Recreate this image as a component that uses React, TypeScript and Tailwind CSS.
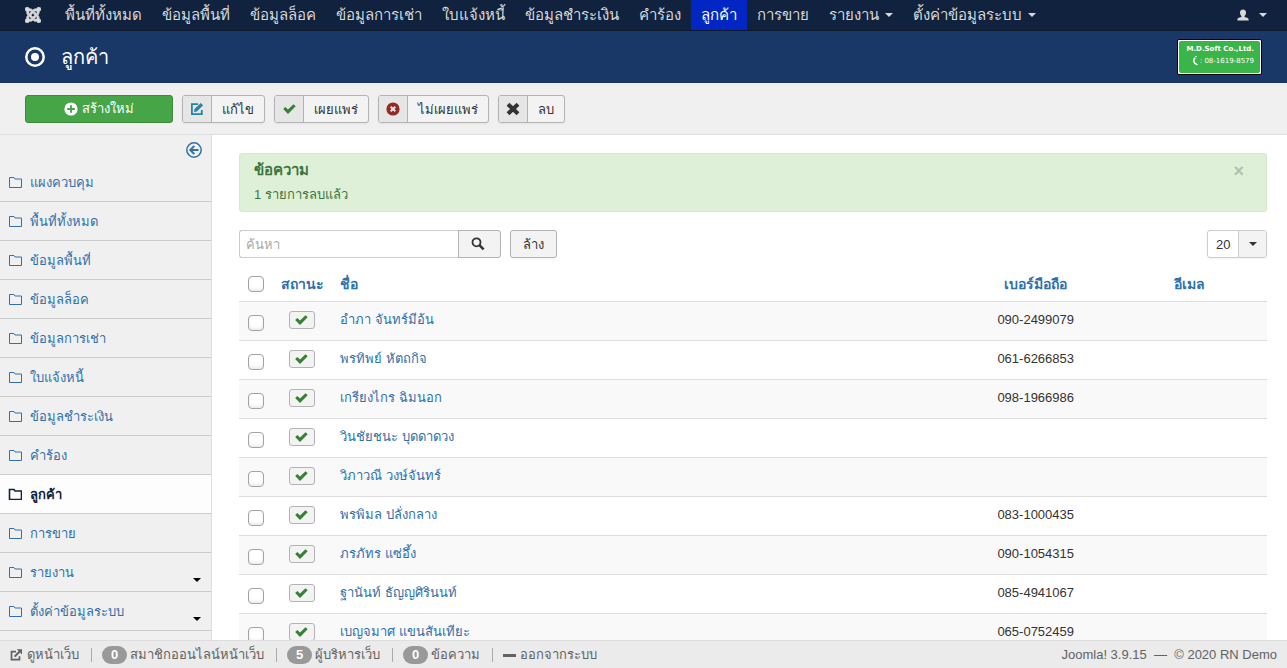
import type { ReactNode } from "react";
import { ImJoomla } from "react-icons/im";

const topNav = [
  { label: "พื้นที่ทั้งหมด" },
  { label: "ข้อมูลพื้นที่" },
  { label: "ข้อมูลล็อค" },
  { label: "ข้อมูลการเช่า" },
  { label: "ใบแจ้งหนี้" },
  { label: "ข้อมูลชำระเงิน" },
  { label: "คำร้อง" },
  { label: "ลูกค้า", active: true },
  { label: "การขาย" },
  { label: "รายงาน", menu: true },
  { label: "ตั้งค่าข้อมูลระบบ", menu: true },
];

const sideNav = [{ label: "แผงควบคุม" }, ...topNav] as { label: string; active?: boolean; menu?: boolean }[];

const customers = [
  { name: "อำภา จันทร์มีอ้น", phone: "090-2499079" },
  { name: "พรทิพย์ หัตถกิจ", phone: "061-6266853" },
  { name: "เกรียงไกร ฉิมนอก", phone: "098-1966986" },
  { name: "วินชัยชนะ บุดดาดวง", phone: "" },
  { name: "วิภาวณี วงษ์จันทร์", phone: "" },
  { name: "พรพิมล ปลั่งกลาง", phone: "083-1000435" },
  { name: "ภรภัทร แซ่อึ้ง", phone: "090-1054315" },
  { name: "ฐานันท์ ธัญญศิรินนท์", phone: "085-4941067" },
  { name: "เบญจมาศ แขนสันเทียะ", phone: "065-0752459" },
];

function Caret({ className = "" }: { className?: string }) {
  return (
    <svg viewBox="0 0 8 4" className={`h-1 w-2 shrink-0 ${className}`} fill="currentColor" aria-hidden="true">
      <path d="M0 0h8L4 4z" />
    </svg>
  );
}

function FolderIcon({ bold }: { bold?: boolean }) {
  return (
    <svg viewBox="0 0 14 12" className="h-3 w-3.5 shrink-0" fill="none" stroke="currentColor" strokeWidth={bold ? 1.6 : 1} aria-hidden="true">
      <path d="M1.5 11.5V1.5h4.500l1 1.500h6.500v8.500z" />
    </svg>
  );
}

function EditIcon() {
  return (
    <svg viewBox="0 0 14 14" className="size-3.5 text-[#2384a3]" aria-hidden="true">
      <path d="M8 2.200H1.900v9.900h9.900V8" fill="none" stroke="currentColor" strokeWidth="1.800" />
      <path d="M4 10l.5-2.900L10.700 .900l2.400 2.400L6.900 9.500z" fill="currentColor" />
    </svg>
  );
}

function CheckIcon() {
  return (
    <svg viewBox="0 0 13 10" className="h-2.5 w-[13px] text-[#378137]" fill="currentColor" aria-hidden="true">
      <path d="M.2 5.100L2.300 3l2.700 2.500L10.500.2l2.200 2L5.300 9.800h-.6z" />
    </svg>
  );
}

function CrossIcon() {
  return (
    <svg viewBox="0 0 14 14" className="size-3.5" stroke="currentColor" strokeWidth="4" aria-hidden="true">
      <path d="M2 2.200l10 9.600M12 2.200L2 11.800" />
    </svg>
  );
}

function PlusCircleIcon() {
  return (
    <svg viewBox="0 0 14 14" className="size-3.5" aria-hidden="true">
      <circle cx="7" cy="7" r="6.600" fill="#fff" />
      <path d="M7 3.200v7.600M3.200 7h7.600" stroke="#46a546" strokeWidth="1.900" />
    </svg>
  );
}

function CancelCircleIcon() {
  return (
    <svg viewBox="0 0 14 14" className="size-3.5" aria-hidden="true">
      <circle cx="7" cy="7" r="6.600" fill="#942a25" />
      <path d="M4.700 4.700l4.600 4.600M9.300 4.700L4.700 9.300" stroke="#e6e6e6" strokeWidth="2" />
    </svg>
  );
}

function TargetIcon() {
  return (
    <svg viewBox="0 0 20 20" className="size-5" aria-hidden="true">
      <circle cx="10" cy="10" r="8.700" fill="none" stroke="currentColor" strokeWidth="2.500" />
      <circle cx="10" cy="10" r="4" fill="currentColor" />
    </svg>
  );
}

function SearchIcon() {
  return (
    <svg viewBox="0 0 14 14" className="size-3.5" fill="none" stroke="currentColor" aria-hidden="true">
      <circle cx="5.500" cy="5.300" r="4" strokeWidth="1.800" />
      <path d="M8.400 8.200l4.200 4.100" strokeWidth="2.500" />
    </svg>
  );
}

function ExternalIcon() {
  return (
    <svg viewBox="0 0 12 12" className="size-3 shrink-0" fill="none" stroke="currentColor" aria-hidden="true">
      <path d="M6 2.600H1.500v8h8V7.200" strokeWidth="1.700" />
      <path d="M4.600 7.600L9.400 2.800" strokeWidth="2" />
      <path d="M6.800.2H12v5.200z" fill="currentColor" stroke="none" />
    </svg>
  );
}

function UserIcon() {
  return (
    <svg viewBox="0 0 12 12" className="size-3" fill="currentColor" aria-hidden="true">
      <path d="M6 .4c2 0 3 1.300 3 3.100 0 1.500-.5 2.700-1.400 3.400v1.200C9.700 8.700 11.600 9 11.600 10.500v1H.4v-1C.4 9 2.300 8.700 4.400 8.100V6.900C3.500 6.200 3 5 3 3.500 3 1.700 4 .4 6 .4z" />
    </svg>
  );
}

function BackIcon() {
  return (
    <svg viewBox="0 0 16 16" className="size-4" fill="none" stroke="currentColor" aria-hidden="true">
      <circle cx="8" cy="8" r="7.200" strokeWidth="1.500" />
      <path d="M8.300 3.900L4.300 8l4 4.100M4.500 8h8" strokeWidth="2" />
    </svg>
  );
}

function PhoneIcon() {
  return (
    <svg viewBox="0 0 8 10" className="h-2.5 w-2" fill="none" stroke="currentColor" strokeWidth="1.500" aria-hidden="true">
      <path d="M2.600 2C1 4 1.800 7.600 5 8.800" />
      <path d="M2.400 1.800l1.400.8M4.500 7.900l1.400.9M3.200.6h1.600" strokeWidth="1" />
    </svg>
  );
}

function ToolButton({ icon, label }: { icon: ReactNode; label: string }) {
  return (
    <button className="flex h-7 items-stretch overflow-hidden rounded-[3px] border border-[#b3b3b3] bg-[#f3f3f3] text-[#333] shadow-[0_1px_2px_rgba(0,0,0,0.05)]">
      <span className="flex w-[29px] items-center justify-center border-r border-[#b3b3b3] bg-[#e6e6e6]">{icon}</span>
      <span className="px-2.5 leading-7">{label}</span>
    </button>
  );
}

function Check({ label }: { label: string }) {
  return (
    <input
      type="checkbox"
      aria-label={label}
      className="block size-4 appearance-none rounded-[4px] border border-[#a3a3a3] bg-white shadow-[inset_0_-2px_3px_rgba(0,0,0,0.08)] checked:bg-[#3071a9]"
    />
  );
}

function Counter({ value, label }: { value: number; label: string }) {
  return (
    <span className="flex items-center gap-[3px]">
      <span className="flex h-[18px] w-[25px] items-center justify-center rounded-full bg-[#999] font-bold text-white">{value}</span>
      {label}
    </span>
  );
}

function Divider() {
  return <span className="mr-2.5 ml-3 h-3.5 w-px bg-[#aaa]" />;
}

export default function App() {
  return (
    <div className="flex h-screen flex-col overflow-hidden bg-white font-['Liberation_Sans',sans-serif] text-[13px] leading-[18px] text-[#333]">
      <nav className="flex h-[31px] shrink-0 items-stretch border-b border-[#0d1a2c] bg-[#10223e] text-[15px] leading-[30px] text-[#d9d9d9]">
        <a href="#" aria-label="Joomla" className="flex items-center pr-3.5 pl-[25px]">
          <ImJoomla className="size-4" stroke="currentColor" strokeWidth="0.6" />
        </a>
        {topNav.map((item) => (
          <a
            key={item.label}
            href="#"
            className={`flex items-center gap-1.5 px-2.5 whitespace-nowrap ${item.active ? "bg-[#0226c4] text-white" : ""}`}
          >
            {item.label}
            {item.menu && <Caret />}
          </a>
        ))}
        <a href="#" aria-label="User menu" className="ml-auto flex items-center gap-2.5 pr-5">
          <UserIcon />
          <Caret />
        </a>
      </nav>

      <header className="flex h-[52px] shrink-0 items-center justify-between bg-[#1a3867] px-[25px] text-white">
        <h1 className="flex items-center gap-4 text-[20px] leading-9">
          <TargetIcon />
          ลูกค้า
        </h1>
        <div className="h-9 w-[85px] rounded-[2px] border border-black bg-white p-px">
          <div className="flex h-full flex-col items-end justify-center rounded-[2px] bg-[#39b54a] pr-1.5 pb-1 font-['DejaVu_Sans',sans-serif] text-[7px] leading-3 whitespace-nowrap">
            <b>M.D.Soft Co.,Ltd.</b>
            <span className="flex items-center">
              <PhoneIcon />: 08-1619-8579
            </span>
          </div>
        </div>
      </header>

      <div className="flex h-[52px] shrink-0 items-center gap-[9px] border-b border-[#dedede] bg-[#f0f0f0] px-[25px]">
        <button className="flex h-7 w-[148px] items-center justify-center gap-1 rounded-[3px] border border-[#3a8a3a] bg-[#46a546] leading-7 text-white">
          <PlusCircleIcon />
          สร้างใหม่
        </button>
        <ToolButton icon={<EditIcon />} label="แก้ไข" />
        <ToolButton icon={<CheckIcon />} label="เผยแพร่" />
        <ToolButton icon={<CancelCircleIcon />} label="ไม่เผยแพร่" />
        <ToolButton icon={<CrossIcon />} label="ลบ" />
      </div>

      <div className="flex min-h-0 flex-1">
        <aside className="w-[212px] shrink-0 overflow-hidden border-r border-[#dedede] bg-[#f0f0f0] text-[#3071a9]">
          <div className="flex h-7 items-center justify-end px-[9px] pt-0.5">
            <button aria-label="ซ่อนแถบข้าง">
              <BackIcon />
            </button>
          </div>
          <ul>
            {sideNav.map((item) => (
              <li key={item.label} className={`border-b border-[#ccc] ${item.active ? "bg-[#fdfdfd] font-bold text-[#10223e]" : ""}`}>
                <a href="#" className="flex h-[38px] items-center gap-2 pr-2.5 pl-2">
                  <FolderIcon bold={item.active} />
                  <span className="pt-px">{item.label}</span>
                  {item.menu && <Caret className="mt-4 ml-auto text-black" />}
                </a>
              </li>
            ))}
          </ul>
        </aside>

        <main className="min-w-0 flex-1 overflow-y-auto pt-[18px] pr-5 pl-[27px] [scrollbar-width:none]">
          <div className="flex items-start justify-between rounded-[3px] border border-[#d6e9c6] bg-[#dff0d8] px-3.5 py-[7px] text-[#3c763d]">
            <div>
              <h4 className="text-[15px] leading-[18px] font-bold">ข้อความ</h4>
              <p className="mt-[7px]">1 รายการลบแล้ว</p>
            </div>
            <button aria-label="ปิด" className="mr-2 text-[18px] leading-5 font-bold text-[#b2c0ad]">
              ×
            </button>
          </div>

          <div className="mt-[18px] flex h-7 items-stretch">
            <input
              type="text"
              aria-label="ค้นหา"
              placeholder="ค้นหา"
              className="w-[219px] rounded-l-[3px] border border-r-0 border-[#ccc] px-1.5 pt-px placeholder:text-[#a9a9a9] placeholder:opacity-100"
            />
            <button aria-label="ค้นหา" className="flex w-[43px] items-center justify-center rounded-r-[3px] border border-[#b3b3b3] bg-[#f3f3f3] pr-1">
              <SearchIcon />
            </button>
            <button className="ml-[9px] rounded-[3px] border border-[#b3b3b3] bg-[#f3f3f3] px-3 leading-7 shadow-[0_1px_2px_rgba(0,0,0,0.05)]">ล้าง</button>
            <div className="relative ml-auto flex w-[60px] rounded-[3px] border border-[#ccc] shadow-[0_1px_2px_rgba(0,0,0,0.05)]">
              <select aria-label="จำนวนต่อหน้า" className="w-full appearance-none bg-transparent pt-px pl-2" defaultValue="20">
                <option>20</option>
                <option>50</option>
              </select>
              <span className="pointer-events-none absolute inset-y-0 right-0 flex w-7 items-center justify-center rounded-r-[2px] border-l border-[#ccc] bg-[#f3f3f3]">
                <Caret />
              </span>
            </div>
          </div>

          <table className="mt-2 w-full table-fixed border-collapse">
            <thead>
              <tr className="h-[35px] text-[14px] text-[#3071a9]">
                <th className="w-[34px] pt-px pl-[9px]">
                  <Check label="เลือกทั้งหมด" />
                </th>
                <th className="w-[58px] pt-0.5">
                  <a href="#">สถานะ</a>
                </th>
                <th className="px-[9px] pt-0.5 text-left">
                  <a href="#">ชื่อ</a>
                </th>
                <th className="w-[15%] pt-0.5">
                  <a href="#">เบอร์มือถือ</a>
                </th>
                <th className="w-[15%] pt-0.5">
                  <a href="#">อีเมล</a>
                </th>
              </tr>
            </thead>
            <tbody>
              {customers.map((c) => (
                <tr key={c.name} className="h-[39px] border-t border-[#ddd] align-top odd:bg-[#f9f9f9]">
                  <td className="pt-[13px] pl-[9px]">
                    <Check label={c.name} />
                  </td>
                  <td className="pt-[9px]">
                    <button
                      aria-label="เผยแพร่แล้ว"
                      className="mx-auto flex h-[18px] w-[26px] items-center justify-center rounded-[3px] border border-[#b3b3b3] bg-[#f3f3f3] pr-0.5"
                    >
                      <CheckIcon />
                    </button>
                  </td>
                  <td className="px-[9px] pt-[9px]">
                    <a href="#" className="text-[#3071a9]">
                      {c.name}
                    </a>
                  </td>
                  <td className="pt-[9px] text-center">{c.phone}</td>
                  <td />
                </tr>
              ))}
            </tbody>
          </table>
        </main>
      </div>

      <footer className="flex h-7 shrink-0 items-center border-t border-[#dedede] bg-[#ebebeb] px-2.5 pt-px text-[#626262]">
        <a href="#" className="flex items-center gap-[5px]">
          <ExternalIcon />
          ดูหน้าเว็บ
        </a>
        <Divider />
        <Counter value={0} label="สมาชิกออนไลน์หน้าเว็บ" />
        <Divider />
        <Counter value={5} label="ผู้บริหารเว็บ" />
        <Divider />
        <Counter value={0} label="ข้อความ" />
        <Divider />
        <a href="#" className="flex items-center gap-1">
          <span className="h-[3px] w-[13px] bg-[#626262]" />
          ออกจากระบบ
        </a>
        <p className="ml-auto whitespace-pre">{"Joomla! 3.9.15  —  © 2020 RN Demo"}</p>
      </footer>
    </div>
  );
}
